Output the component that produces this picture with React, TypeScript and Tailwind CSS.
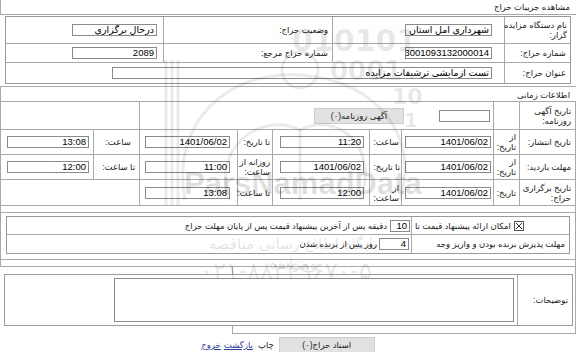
import React from 'react';

function Field({ className = '', children }: { className?: string; children?: React.ReactNode }) {
  return (
    <div className={`h-[12px] shrink-0 overflow-hidden whitespace-nowrap border border-[#8a8a8a] bg-white px-[2px] text-right text-[9.5px] leading-[10px] text-black ${className}`}>
      {children}
    </div>
  );
}

function Cell({ className = '', children }: { className?: string; children?: React.ReactNode }) {
  return <div className={`flex shrink-0 items-center border-l border-[#a9a9a9] ${className}`}>{children}</div>;
}

export default function App() {
  return (
    <div
      dir="rtl"
      className="relative h-[352px] w-[576px] overflow-hidden bg-white font-['Liberation_Sans','DejaVu_Sans',sans-serif] text-[8.5px] leading-[10px] text-[#222]"
    >
      {/* page title */}
      <div className="h-[15px] border-b border-l border-[#a9a9a9] pr-[6px] pt-[2px]">مشاهده جزییات حراج</div>

      {/* general info */}
      <div className="border-b border-[#a9a9a9] px-[5px] pb-[2px] pt-[1px]">
        <div className="border border-[#9a9a9a]">
          <div className="flex h-[27px] border-b border-[#a9a9a9]">
            <Cell className="w-[66px] whitespace-nowrap pr-[3px]">نام دستگاه مزایده<br />گزار:</Cell>
            <Cell className="w-[172px] pr-[12px]">
              <Field className="w-[87px]">شهرداری امل استان مازندران</Field>
            </Cell>
            <Cell className="w-[169px] pr-[4px]">وضعیت حراج:</Cell>
            <div className="flex flex-1 items-center pr-[6px]">
              <Field className="w-[85px]">درحال برگزاری</Field>
            </div>
          </div>
          <div className="flex h-[19px] border-b border-[#a9a9a9]">
            <Cell className="w-[66px] pr-[4px]">شماره حراج:</Cell>
            <Cell className="w-[172px] pr-[12px]">
              <Field className="w-[87px] px-[1px]">3001093132000014</Field>
            </Cell>
            <Cell className="w-[169px] pr-[4px]">شماره حراج مرجع:</Cell>
            <div className="flex flex-1 items-center pr-[6px]">
              <Field className="w-[85px]">2089</Field>
            </div>
          </div>
          <div className="flex h-[20px]">
            <Cell className="w-[66px] pr-[4px]">عنوان حراج:</Cell>
            <div className="flex flex-1 items-center pr-[12px]">
              <Field className="w-[380px]">تست آزمایشی ترشیفات مزایده</Field>
            </div>
          </div>
        </div>
      </div>

      {/* time info */}
      <div className="h-[15px] border-b border-l border-[#a9a9a9] pr-[6px] pt-[3px]">اطلاعات زمانی</div>
      <div className="border-x border-b border-[#a9a9a9]">
        <div className="flex h-[28px] border-b border-[#a9a9a9]">
          <Cell className="w-[56px] pr-[4px]">تاریخ آگهی<br />روزنامه:</Cell>
          <Cell className="w-[26px]" />
          <Cell className="w-[354px] gap-[35px] pr-[3px]">
            <Field className="w-[51px]" />
            <div className="flex h-[16px] w-[90px] items-center justify-center border border-[#cdcdcd] bg-[#e1e1e1] text-[#222]">آگهی روزنامه(۰)</div>
          </Cell>
          <div className="flex-1" />
        </div>
        <div className="flex h-[25px] border-b border-[#a9a9a9]">
          <Cell className="w-[56px] pr-[4px]">تاریخ انتشار:</Cell>
          <Cell className="w-[26px] pr-[3px]">از<br />تاریخ:</Cell>
          <Cell className="w-[92px] pr-[2px]"><Field className="w-[86px]">1401/06/02</Field></Cell>
          <Cell className="w-[32px] pr-[2px]">ساعت:</Cell>
          <Cell className="w-[97px] pr-[5px]"><Field className="w-[84px]">11:20</Field></Cell>
          <Cell className="w-[35px] pr-[2px] whitespace-nowrap">تا تاریخ:</Cell>
          <Cell className="w-[98px] pr-[7px]"><Field className="w-[85px]">1401/06/02</Field></Cell>
          <Cell className="w-[46px] pr-[8px]">ساعت:</Cell>
          <div className="flex flex-1 items-center pr-[4px]"><Field className="w-[82px]">13:08</Field></div>
        </div>
        <div className="flex h-[25px] border-b border-[#a9a9a9]">
          <Cell className="w-[56px] pr-[4px]">مهلت بازدید:</Cell>
          <Cell className="w-[26px] pr-[3px]">از<br />تاریخ:</Cell>
          <Cell className="w-[92px] pr-[2px]"><Field className="w-[86px]">1401/06/02</Field></Cell>
          <Cell className="w-[32px] pr-[1px] whitespace-nowrap">تا تاریخ:</Cell>
          <Cell className="w-[97px] pr-[5px]"><Field className="w-[84px]">1401/06/02</Field></Cell>
          <Cell className="w-[35px] pr-[2px]">روزانه از<br />ساعت:</Cell>
          <Cell className="w-[98px] pr-[7px]"><Field className="w-[85px]">11:00</Field></Cell>
          <Cell className="w-[46px] pr-[4px] whitespace-nowrap">تا ساعت:</Cell>
          <div className="flex flex-1 items-center pr-[4px]"><Field className="w-[82px]">12:00</Field></div>
        </div>
        <div className="flex h-[25px]">
          <Cell className="w-[56px] pr-[4px]">تاریخ برگزاری<br />حراج:</Cell>
          <Cell className="w-[26px] pr-[3px]">تاریخ:</Cell>
          <Cell className="w-[92px] pr-[2px]"><Field className="w-[86px]">1401/06/02</Field></Cell>
          <Cell className="w-[32px] pr-[2px]">از<br />ساعت:</Cell>
          <Cell className="w-[97px] pr-[5px]"><Field className="w-[84px]">12:00</Field></Cell>
          <Cell className="w-[35px] pr-[2px] whitespace-nowrap">تا ساعت:</Cell>
          <Cell className="w-[98px] pr-[7px]"><Field className="w-[85px]">13:08</Field></Cell>
          <div className="flex-1" />
        </div>
      </div>

      {/* bidding options */}
      <div className="h-[7px] border-x border-b border-[#a9a9a9]" />
      <div className="border-x border-b border-[#a9a9a9] px-[5px] pb-[5px] pt-[3px]">
        <div className="border border-[#9a9a9a]">
          <div className="flex h-[18px] border-b border-[#a9a9a9]">
            <Cell className="w-[158px] justify-end gap-[3px] pl-[3px]">
              <span className="flex h-[10px] w-[10px] items-center justify-center border border-[#555] bg-white">
                <svg width="8" height="8" viewBox="0 0 8 8"><path d="M1 1L7 7M7 1L1 7" stroke="#333" strokeWidth="1" /></svg>
              </span>
              <span>امکان ارائه پیشنهاد قیمت تا</span>
            </Cell>
            <div className="flex flex-1 items-center gap-[3px] pr-[1px]">
              <Field className="w-[20px]">10</Field>
              <span>دقیقه پس از آخرین پیشنهاد قیمت پس از پایان مهلت حراج</span>
            </div>
          </div>
          <div className="flex h-[18px]">
            <Cell className="w-[158px] pr-[4px]">مهلت پذیرش برنده بودن و واریز وجه</Cell>
            <div className="flex flex-1 items-center gap-[2px] pr-[2px]">
              <Field className="w-[30px]">4</Field>
              <span>روز پس از برنده شدن</span>
            </div>
          </div>
        </div>
      </div>
      <div className="h-[7px] border-x border-b border-[#a9a9a9]" />

      {/* description */}
      <div className="ml-[232px] h-[67px] border-b border-l border-r border-[#a9a9a9] pt-[7px]">
        <div className="-ml-[229px] mr-[2px] flex h-[52px] border border-[#9a9a9a] bg-white">
          <Cell className="w-[55px] pr-[4px]">توضیحات:</Cell>
          <div className="flex flex-1 items-center pr-[3px]">
            <div className="h-[44px] w-[400px] border border-[#8a8a8a] bg-white" />
          </div>
        </div>
      </div>

      {/* actions */}
      <div className="flex items-center justify-center gap-[5px] pt-[3px]">
        <div className="flex h-[16px] w-[96px] items-center justify-center border border-[#cdcdcd] bg-[#e1e1e1]">اسناد حراج(۰)</div>
        <span>چاپ</span>
        <span className="text-[#2b3a9c] underline">بازگشت</span>
        <span className="-mr-[2px] text-[#2b3a9c] underline">خروج</span>
      </div>

      {/* watermark */}
      <div className="pointer-events-none absolute inset-0">
        <svg className="absolute left-0 top-0" width="576" height="352" viewBox="0 0 576 352">
          <g fill="none" stroke="rgba(0,0,0,0.08)" strokeWidth="3">
            <path d="M166 60 L166 205 M172 60 L172 205 M178 60 L178 205" />
            <path d="M185 200 C 170 120, 230 70, 300 75" />
            <path d="M300 75 C 380 80, 420 140, 400 200" />
            <path d="M230 200 C 210 150, 260 110, 300 130 C 340 110, 380 150, 360 200" />
            <path d="M300 130 L300 200" />
            <circle cx="300" cy="70" r="18" />
          </g>
        </svg>
        <div dir="ltr" className="absolute left-[292px] top-[26px] font-['DejaVu_Sans',sans-serif] text-[30px] font-bold leading-[30px] text-[rgba(0,0,0,0.09)]">010101</div>
        <div dir="ltr" className="absolute left-[330px] top-[58px] font-['DejaVu_Sans',sans-serif] text-[26px] font-bold leading-[26px] text-[rgba(0,0,0,0.09)]">0001</div>
        <div dir="ltr" className="absolute left-[392px] top-[86px] font-['DejaVu_Sans',sans-serif] text-[22px] font-bold leading-[22px] text-[rgba(0,0,0,0.09)]">10</div>
        <div dir="ltr" className="absolute left-[404px] top-[110px] font-['DejaVu_Sans',sans-serif] text-[20px] font-bold leading-[20px] text-[rgba(0,0,0,0.09)]">1</div>
        <div dir="ltr" className="absolute left-[184px] top-[168px] font-['Liberation_Sans',sans-serif] text-[31px] font-bold leading-[32px] text-[rgba(0,0,0,0.13)]">ParsNamadData</div>
        <div className="absolute left-[188px] top-[234px] w-[210px] text-center font-['DejaVu_Sans',sans-serif] text-[15px] leading-[20px] text-[rgba(0,0,0,0.12)]">پایگاه اطلاع رسانی مناقصه ومزایده</div>
        <div dir="ltr" className="absolute left-[200px] top-[257px] font-['DejaVu_Sans',sans-serif] text-[24px] leading-[28px] text-[rgba(0,0,0,0.11)]">۰۲۱-۸۸۳۴۹۶۷۰-۵</div>
      </div>
    </div>
  );
}
